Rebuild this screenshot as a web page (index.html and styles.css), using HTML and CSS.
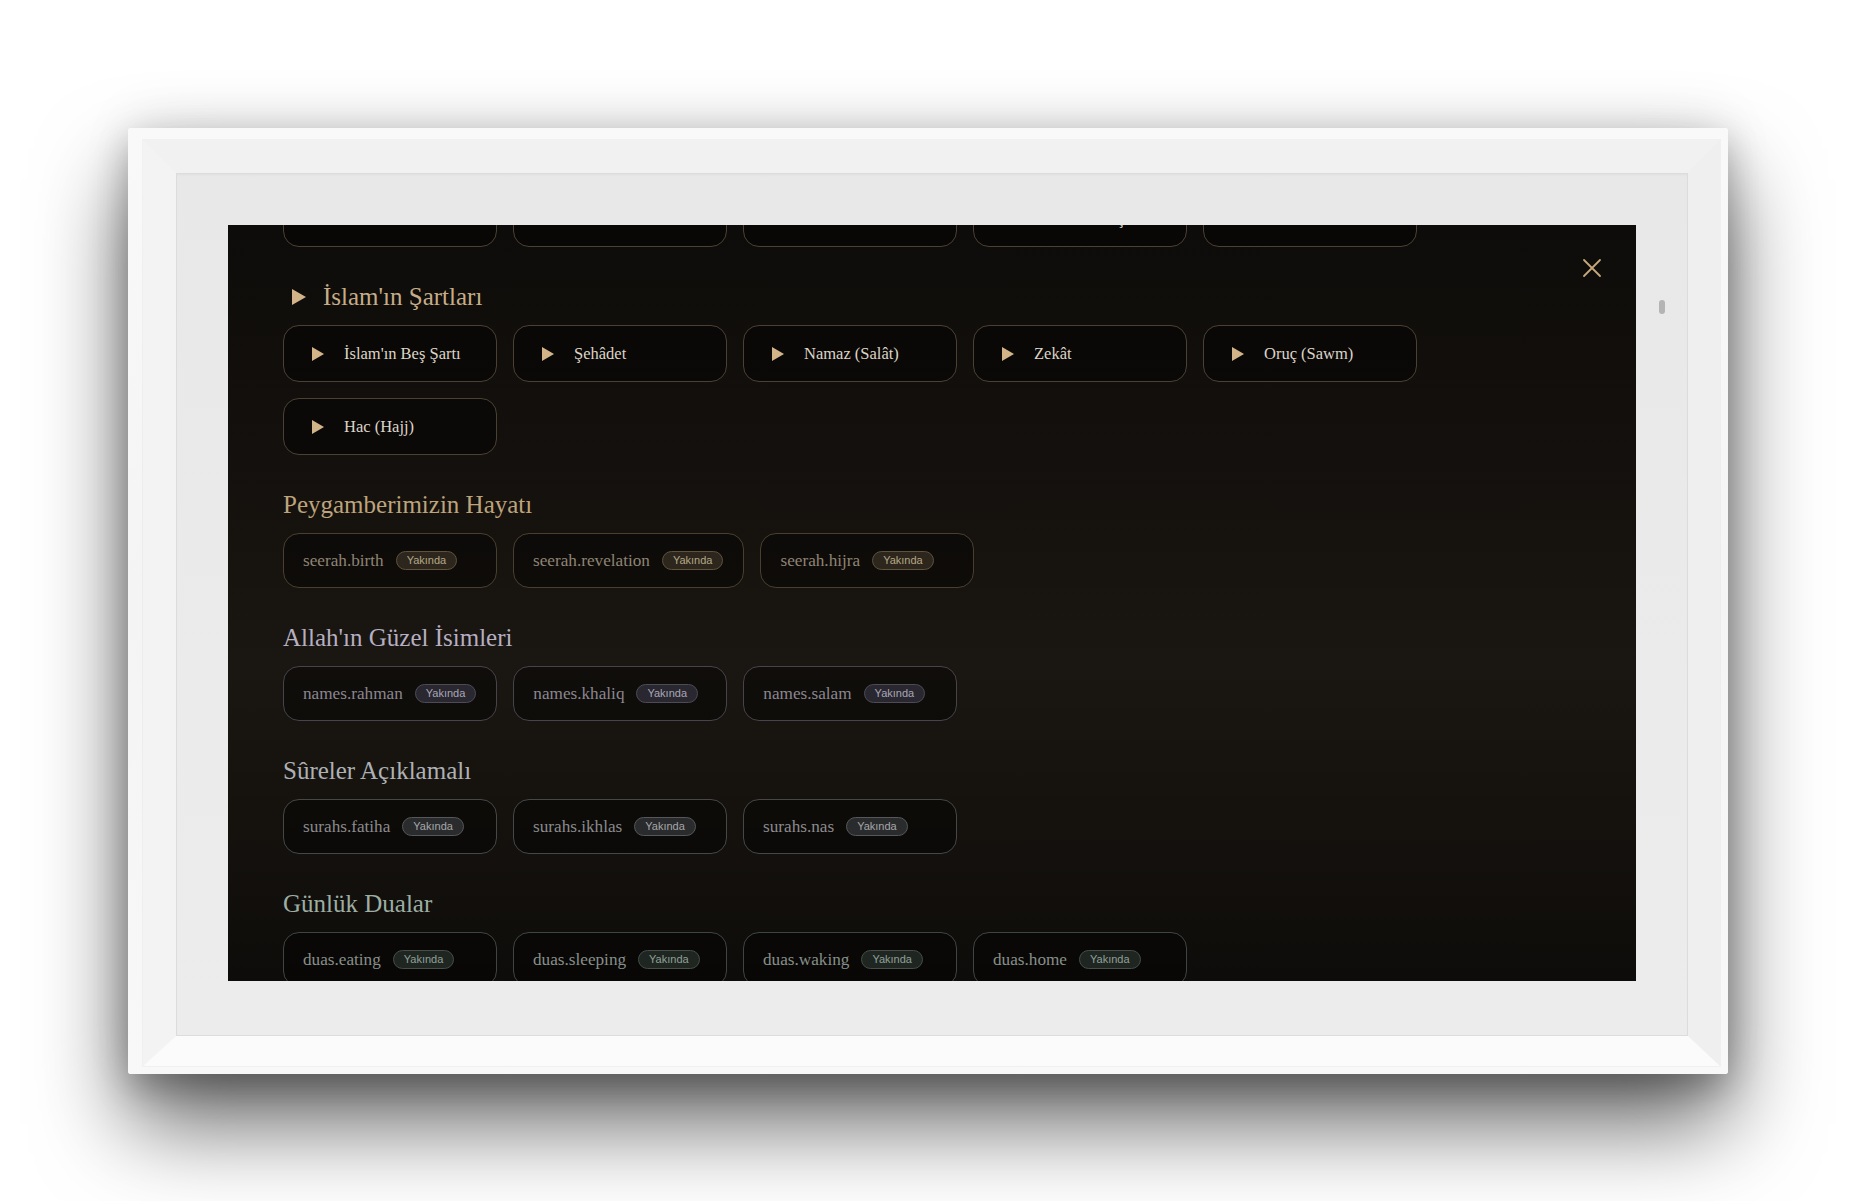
FILE: index.html
```html
<!DOCTYPE html>
<html lang="tr">
<head>
<meta charset="utf-8">
<title>İslam</title>
<link rel="stylesheet" href="styles.css">
</head>
<body>
<div class="scene">
  <div class="frame">
    <div class="bevel">
      <div class="mat">
        <div class="screen">
          <button class="close" aria-label="Kapat">
            <svg width="20" height="20" viewBox="0 0 20 20"><path d="M2 2 L18 18 M18 2 L2 18" stroke="#c7a87b" stroke-width="1.8" stroke-linecap="round" fill="none"/></svg>
          </button>
          <div class="content">
            <div class="row">
              <div class="card tcard"></div>
              <div class="card tcard"></div>
              <div class="card tcard"></div>
              <div class="card tcard"><span class="tri tri-hidden"></span><span>Ahirete İnanç</span></div>
              <div class="card tcard"></div>
            </div>

            <section class="sec">
              <h2 class="title title-main"><span class="tri tri-lg"></span>İslam'ın Şartları</h2>
              <div class="row">
                <div class="card tcard"><span class="tri"></span><span>İslam'ın Beş Şartı</span></div>
                <div class="card tcard"><span class="tri"></span><span>Şehâdet</span></div>
                <div class="card tcard"><span class="tri"></span><span>Namaz (Salât)</span></div>
                <div class="card tcard"><span class="tri"></span><span>Zekât</span></div>
                <div class="card tcard"><span class="tri"></span><span>Oruç (Sawm)</span></div>
                <div class="card tcard"><span class="tri"></span><span>Hac (Hajj)</span></div>
              </div>
            </section>

            <section class="sec t-gold">
              <h2 class="title">Peygamberimizin Hayatı</h2>
              <div class="row">
                <div class="card bcard"><span class="lbl">seerah.birth</span><span class="badge">Yakında</span></div>
                <div class="card bcard"><span class="lbl">seerah.revelation</span><span class="badge">Yakında</span></div>
                <div class="card bcard"><span class="lbl">seerah.hijra</span><span class="badge">Yakında</span></div>
              </div>
            </section>

            <section class="sec t-violet">
              <h2 class="title">Allah'ın Güzel İsimleri</h2>
              <div class="row">
                <div class="card bcard"><span class="lbl">names.rahman</span><span class="badge">Yakında</span></div>
                <div class="card bcard"><span class="lbl">names.khaliq</span><span class="badge">Yakında</span></div>
                <div class="card bcard"><span class="lbl">names.salam</span><span class="badge">Yakında</span></div>
              </div>
            </section>

            <section class="sec t-grey">
              <h2 class="title">Sûreler Açıklamalı</h2>
              <div class="row">
                <div class="card bcard"><span class="lbl">surahs.fatiha</span><span class="badge">Yakında</span></div>
                <div class="card bcard"><span class="lbl">surahs.ikhlas</span><span class="badge">Yakında</span></div>
                <div class="card bcard"><span class="lbl">surahs.nas</span><span class="badge">Yakında</span></div>
              </div>
            </section>

            <section class="sec t-green">
              <h2 class="title">Günlük Dualar</h2>
              <div class="row">
                <div class="card bcard"><span class="lbl">duas.eating</span><span class="badge">Yakında</span></div>
                <div class="card bcard"><span class="lbl">duas.sleeping</span><span class="badge">Yakında</span></div>
                <div class="card bcard"><span class="lbl">duas.waking</span><span class="badge">Yakında</span></div>
                <div class="card bcard"><span class="lbl">duas.home</span><span class="badge">Yakında</span></div>
              </div>
            </section>
          </div>
        </div>
        <div class="scroll-thumb"></div>
      </div>
    </div>
  </div>
</div>
</body>
</html>
```

FILE: styles.css
```css
html, body {
  margin: 0;
  padding: 0;
}
body {
  width: 1856px;
  height: 1201px;
  overflow: hidden;
  background: #ffffff;
  font-family: "Liberation Serif", "Times New Roman", serif;
}

.scene {
  padding: 128px 0 0 128px;
}

.frame {
  width: 1600px;
  height: 946px;
  box-sizing: border-box;
  padding: 12px 8px 8px 15px;
  background: linear-gradient(180deg, #f9f9f9 0%, #f4f4f4 50%, #f8f8f8 100%);
  border-radius: 3px;
  box-shadow: 0 50px 90px rgba(0, 0, 0, 0.6), 0 15px 35px rgba(0, 0, 0, 0.22), 0 -10px 50px rgba(0, 0, 0, 0.08);
}

.bevel {
  height: 100%;
  box-sizing: border-box;
  border-style: solid;
  border-width: 33px 32px 30px 33px;
  border-color: #f1f1f1 #efefef #fbfbfb #f3f3f3;
  box-shadow: 0 0 0 1px rgba(0, 0, 0, 0.03);
}

.mat {
  position: relative;
  height: 100%;
  box-sizing: border-box;
  padding: 52px 52px 55px 52px;
  background: linear-gradient(180deg, #e8e8e8 0%, #ebebeb 60%, #ececec 100%);
  box-shadow: inset 0 0 0 1px #dcdcdc, inset 0 2px 3px rgba(0, 0, 0, 0.04);
}

.scroll-thumb {
  position: absolute;
  left: 1483px;
  top: 127px;
  width: 6px;
  height: 14px;
  border-radius: 3px;
  background: #b4b4b4;
}

.screen {
  position: relative;
  height: 756px;
  overflow: hidden;
  background: linear-gradient(180deg, #0e0c0a 0%, #13100d 30%, #1a1611 58%, #15120e 78%, #0e0c0a 100%);
}

.close {
  position: absolute;
  left: 1354px;
  top: 33px;
  width: 20px;
  height: 20px;
  padding: 0;
  border: 0;
  background: none;
  display: block;
}
.close svg {
  display: block;
}

.content {
  margin-top: -35px;
  padding-left: 55px;
}

.row {
  display: flex;
  flex-wrap: wrap;
  gap: 16px;
  max-width: 1140px;
}

.sec {
  margin-top: 34px;
}

.title {
  margin: 0 0 12px 0;
  height: 32px;
  line-height: 32px;
  font-size: 25px;
  font-weight: normal;
  display: flex;
  align-items: center;
  white-space: nowrap;
}

.title-main {
  color: #c6ad88;
  padding-left: 9px;
}

.tri {
  display: inline-block;
  width: 0;
  height: 0;
  border-style: solid;
  border-width: 7px 0 7px 12.5px;
  border-color: transparent transparent transparent #d3b489;
  flex: none;
}
.tri-hidden {
  visibility: hidden;
}
.tri-lg {
  border-width: 8.5px 0 8.5px 14px;
  margin-right: 17px;
}

.card {
  box-sizing: border-box;
  min-width: 214px;
  border: 1.5px solid #4a4133;
  border-radius: 16px;
  background: rgba(0, 0, 0, 0.38);
  display: flex;
  align-items: center;
  white-space: nowrap;
}

.tcard {
  width: 214px;
  height: 57px;
  padding-left: 28px;
  gap: 20px;
  color: #ddd5c8;
  font-size: 16.5px;
}

.bcard {
  height: 55px;
  padding: 0 20px 0 19px;
  gap: 12px;
  font-size: 17.2px;
}

.badge {
  font-family: "Liberation Sans", Arial, sans-serif;
  font-size: 11px;
  height: 19px;
  line-height: 17px;
  box-sizing: border-box;
  padding: 0 10px;
  border-radius: 10px;
  border: 1px solid;
}

/* themes */
.t-gold .title { color: #bea47c; }
.t-gold .card { border-color: #4a3f2f; }
.t-gold .lbl { color: #8e8474; }
.t-gold .badge { background: #2c261d; border-color: #5e523d; color: #b5a686; }

.t-violet .title { color: #b6afc2; }
.t-violet .card { border-color: #46434c; }
.t-violet .lbl { color: #8b8690; }
.t-violet .badge { background: #29272f; border-color: #4e4a58; color: #aaa6b6; }

.t-grey .title { color: #adb1b5; }
.t-grey .card { border-color: #454748; }
.t-grey .lbl { color: #8a8b8c; }
.t-grey .badge { background: #2a2b2d; border-color: #55575a; color: #a5a7a9; }

.t-green .title { color: #9daea3; }
.t-green .card { border-color: #3e4641; }
.t-green .lbl { color: #878f8a; }
.t-green .badge { background: #1f2622; border-color: #434f47; color: #8fa096; }
```
